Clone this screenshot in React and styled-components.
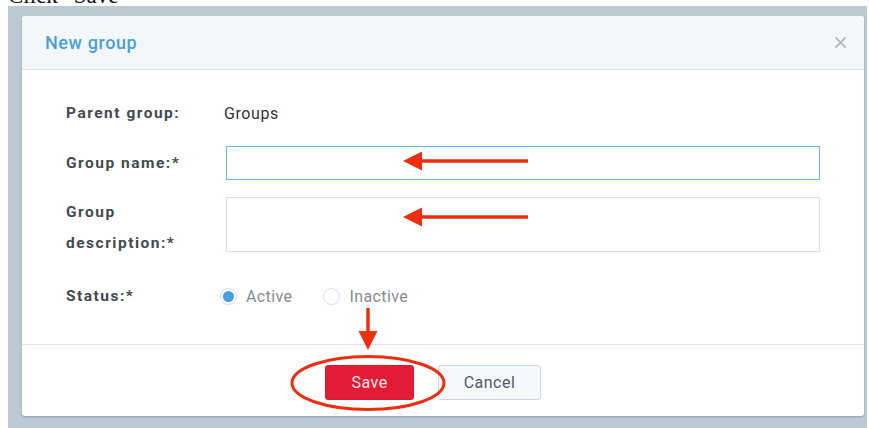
import React from 'react';
import styled, { createGlobalStyle } from 'styled-components';

const GlobalStyle = createGlobalStyle`
  html, body {
    margin: 0;
    padding: 0;
    background: #ffffff;
  }
  body {
    font-family: Roboto, "Liberation Sans", Arial, sans-serif;
    overflow: hidden;
  }
`;

const Page = styled.div`
  position: relative;
  width: 869px;
  height: 428px;
  overflow: hidden;
`;

// last line of the doc text above the shot, mostly cut off
const Caption = styled.div`
  height: 6px;
  overflow: hidden;
  padding-left: 8px;
  span {
    display: block;
    margin-top: -16px;
    font-family: "Liberation Serif", "Times New Roman", serif;
    font-size: 23px;
    line-height: 23px;
    color: #111;
  }
`;

const Backdrop = styled.div`
  margin-left: 8px;
  width: 859px;
  height: 422px;
  box-sizing: border-box;
  padding: 10px 3px 12px 14px;
  background: #b9cad3;
`;

const Modal = styled.div`
  height: 100%;
  background: #ffffff;
  border-radius: 3px;
  box-shadow: 0 1px 2px rgba(60, 80, 100, 0.35);
  display: flex;
  flex-direction: column;
  overflow: hidden;
`;

const Header = styled.div`
  height: 53px;
  flex-shrink: 0;
  display: flex;
  align-items: center;
  justify-content: space-between;
  padding: 0 17px 0 23px;
  background: #f4f7fa;
  border-bottom: 1px solid #dde2f2;
`;

const Title = styled.h3`
  margin: 0;
  font-size: 18px;
  font-weight: 500;
  color: #4aa0d6;
  letter-spacing: 0.6px;
`;

const Close = styled.button`
  border: 0;
  background: none;
  padding: 0;
  color: #b3b6ba;
  display: flex;
  svg {
    width: 13px;
    height: 13px;
  }
`;

const Body = styled.div`
  flex: 1;
  padding: 28px 44px 0 44px;
  display: grid;
  grid-template-columns: 160px 1fr;
  row-gap: 17px;
  align-content: start;
`;

const Label = styled.div`
  font-size: 15.5px;
  font-weight: 700;
  letter-spacing: 1.5px;
  color: #444a4f;
  line-height: 31px;
  max-width: 140px;
  align-self: ${(p) => (p.top ? 'start' : 'center')};
  margin-top: ${(p) => (p.gapAbove ? '5px' : '0')};
`;

const Value = styled.div`
  font-size: 16px;
  color: #333;
  line-height: 31px;
  letter-spacing: 0.6px;
  margin-left: -2px;
`;

const TextInput = styled.input`
  display: block;
  width: 100%;
  height: 34px;
  box-sizing: border-box;
  border: 1px solid ${(p) => (p.focused ? '#6cb8ec' : '#d7ddf4')};
  border-radius: 0;
  outline: none;
  background: #fff;
  font: inherit;
`;

const TextArea = styled.textarea`
  display: block;
  width: 100%;
  height: 55px;
  box-sizing: border-box;
  border: 1px solid #d7ddf4;
  resize: none;
  outline: none;
  font: inherit;
`;

const RadioGroup = styled.div`
  display: flex;
  align-items: center;
  gap: 31px;
  margin: 5px 0 0 -6px;
  height: 31px;
`;

const RadioOption = styled.label`
  display: flex;
  align-items: center;
  gap: 9px;
  font-size: 16px;
  color: #878c91;
  letter-spacing: 0.4px;
`;

const RadioDot = styled.span`
  width: 17px;
  height: 17px;
  box-sizing: border-box;
  border-radius: 50%;
  border: 1px solid #d3dbf0;
  background: #fff;
  display: flex;
  align-items: center;
  justify-content: center;
  &::after {
    content: '';
    width: 11px;
    height: 11px;
    border-radius: 50%;
    background: ${(p) => (p.checked ? '#4a9fe6' : 'transparent')};
  }
`;

const Footer = styled.div`
  height: 71px;
  flex-shrink: 0;
  border-top: 1px solid #dde2f2;
  display: flex;
  align-items: center;
  justify-content: center;
  gap: 24px;
  padding-right: 20px;
`;

const Button = styled.button`
  height: 35px;
  width: ${(p) => p.w}px;
  margin-top: 3px;
  padding-top: 2px;
  border-radius: 3px;
  font-family: inherit;
  font-size: 16px;
  letter-spacing: 0.5px;
  border: 1px solid ${(p) => (p.primary ? '#d81a31' : '#cdd6e2')};
  background: ${(p) => (p.primary ? '#e21c36' : '#f5f8fb')};
  color: ${(p) => (p.primary ? '#fbe3e6' : '#555a5f')};
`;

const Marks = styled.svg`
  position: absolute;
  inset: 0;
  pointer-events: none;
`;

const RED = '#ee2c10';

function Arrow({ y }) {
  return (
    <g>
      <line x1="528" y1={y} x2="418" y2={y} stroke={RED} strokeWidth="3.5" />
      <polygon points={`403,${y} 422,${y - 9.5} 422,${y + 9.5}`} fill={RED} />
    </g>
  );
}

export default function App() {
  return (
    <Page>
      <GlobalStyle />
      <Caption>
        <span>Click “Save”</span>
      </Caption>
      <Backdrop>
        <Modal>
          <Header>
            <Title>New group</Title>
            <Close aria-label="close">
              <svg viewBox="0 0 14 14">
                <path d="M1.5 1.5 L12.5 12.5 M12.5 1.5 L1.5 12.5" stroke="currentColor" strokeWidth="2" />
              </svg>
            </Close>
          </Header>
          <Body>
            <Label>Parent group:</Label>
            <Value>Groups</Value>

            <Label>Group name:*</Label>
            <TextInput focused />

            <Label top>Group description:*</Label>
            <TextArea />

            <Label gapAbove>Status:*</Label>
            <RadioGroup>
              <RadioOption>
                <RadioDot checked />
                Active
              </RadioOption>
              <RadioOption>
                <RadioDot />
                Inactive
              </RadioOption>
            </RadioGroup>
          </Body>
          <Footer>
            <Button primary w={89}>Save</Button>
            <Button w={103}>Cancel</Button>
          </Footer>
        </Modal>
      </Backdrop>
      <Marks width="869" height="428" viewBox="0 0 869 428">
        <Arrow y={161} />
        <Arrow y={217} />
        <line x1="368" y1="308" x2="368" y2="334" stroke={RED} strokeWidth="3.5" />
        <polygon points="368,350 358.5,331 377.5,331" fill={RED} />
        <ellipse cx="368" cy="383" rx="76" ry="26.5" fill="none" stroke={RED} strokeWidth="3" />
      </Marks>
    </Page>
  );
}
